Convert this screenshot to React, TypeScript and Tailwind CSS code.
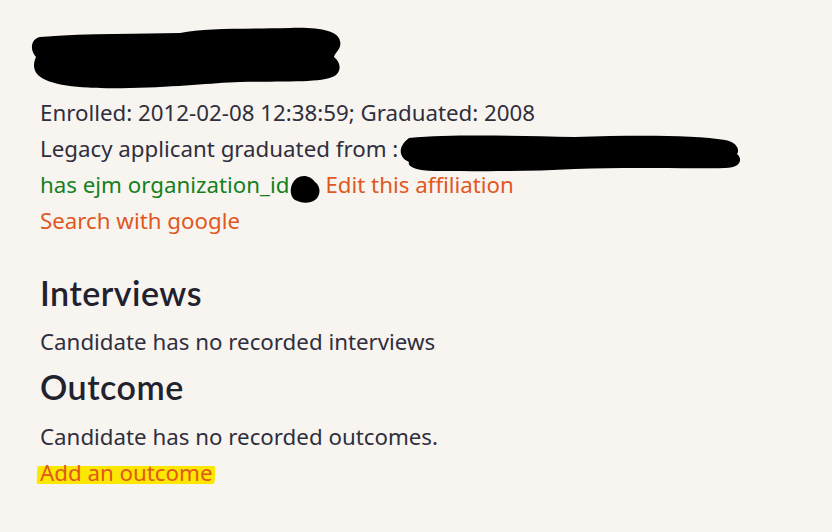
function Blot({ className, d, w, h }: { className: string; d: string; w: number; h: number }) {
  return (
    <svg className={className} width={w} height={h} viewBox={`0 0 ${w} ${h}`}>
      <path d={d} fill="#000" />
    </svg>
  )
}

export default function App() {
  return (
    <div className="min-h-[532px] w-full bg-[#f8f5f1] pl-[40px] pt-[25px] text-[22.3px] leading-[36px] text-[#2f2f3d] [font-family:'Noto_Sans',sans-serif]">
      <Blot
        className="-ml-[10px] block"
        w={312}
        h={64}
        d="M10 12 C60 8 110 9 150 8 C175 3 210 4 260 3 C290 2 308 6 310 16 C312 24 305 27 304 32 C310 37 312 44 306 50 C296 58 260 56 210 57 C180 58 150 62 100 63 C60 64 20 62 8 50 C2 44 4 36 6 32 C0 26 0 14 10 12 Z"
      />
      <div className="mt-[6px]">
        <p className="h-[36px]">Enrolled: 2012-02-08 12:38:59; Graduated: 2008</p>
        <p className="flex h-[36px] items-center">
          <span>Legacy applicant graduated from :</span>
          <Blot
            className="-ml-[3px] mt-[6px] shrink-0"
            w={350}
            h={40}
            d="M14 6 C60 2 120 4 180 5 C240 3 300 3 330 8 C342 10 345 18 342 22 C348 27 346 36 330 36 C290 37 240 35 180 37 C130 40 80 39 40 39 C20 39 12 34 14 30 C4 26 2 15 14 6 Z"
          />
        </p>
        <p className="flex h-[36px] items-center">
          <span className="text-[#15801d]">has ejm organization_id</span>
          <Blot
            className="mt-[8px] shrink-0"
            w={33}
            h={30}
            d="M8 4 C14 0 22 2 26 8 C32 12 32 22 26 26 C20 30 12 29 6 26 C0 22 0 10 8 4 Z"
          />
          <a className="ml-[3px] text-[#e1581f]">Edit this affiliation</a>
        </p>
        <p className="h-[36px]">
          <a className="text-[#e1581f]">Search with google</a>
        </p>
      </div>
      <h2 className="mt-[34px] text-[34px] font-semibold leading-[40px] tracking-[0.5px] text-[#22222e] [font-family:Lato,sans-serif]">
        Interviews
      </h2>
      <p className="mt-[11px]">Candidate has no recorded interviews</p>
      <h2 className="mt-[6px] text-[34px] font-semibold leading-[42px] tracking-[0.5px] text-[#22222e] [font-family:Lato,sans-serif]">
        Outcome
      </h2>
      <p className="mt-[11px]">Candidate has no recorded outcomes.</p>
      <p>
        <a className="relative inline-block text-[#e1581f]">
          <span className="absolute -left-[3px] -right-[2px] top-[11px] h-[18px] -skew-x-3 rounded-[2px] bg-[#fce700]" />
          <span className="relative">Add an outcome</span>
        </a>
      </p>
    </div>
  )
}
